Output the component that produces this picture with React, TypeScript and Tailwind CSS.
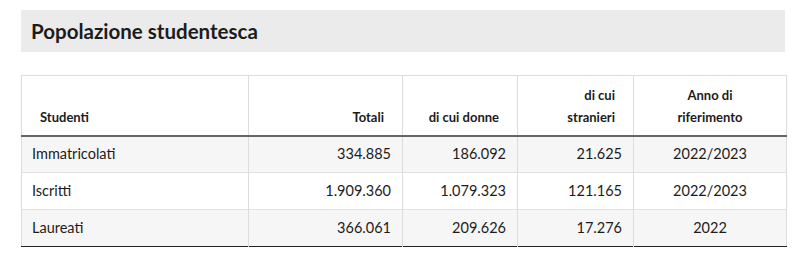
const rows = [
  { label: 'Immatricolati', totali: '334.885', donne: '186.092', stranieri: '21.625', anno: '2022/2023' },
  { label: 'Iscritti', totali: '1.909.360', donne: '1.079.323', stranieri: '121.165', anno: '2022/2023' },
  { label: 'Laureati', totali: '366.061', donne: '209.626', stranieri: '17.276', anno: '2022' },
]

export default function App() {
  return (
    <div
      className="h-[258px] w-[800px] bg-white pl-[21px] pt-[10px] text-[#1c1c1c]"
      style={{ fontFamily: 'Lato, "Noto Sans", sans-serif' }}
    >
      {/* Titolo sezione */}
      <div className="flex h-[42px] w-[764px] items-center bg-[#ebebeb] pl-[10px]">
        <h2 className="text-[20.5px] font-bold">Popolazione studentesca</h2>
      </div>

      {/* Tabella */}
      <table className="mt-[23px] w-[765px] table-fixed border-collapse border border-[#dcdcdc] text-[14.5px]">
        <colgroup>
          <col className="w-[227px]" />
          <col className="w-[154px]" />
          <col className="w-[115px]" />
          <col className="w-[116px]" />
          <col className="w-[153px]" />
        </colgroup>
        <thead>
          <tr className="h-[60px] border-b-2 border-[#666]">
            <th className="border-r border-[#dcdcdc] px-[18px] pb-[7px] text-left align-bottom text-[13px] leading-[22px] font-bold">
              Studenti
            </th>
            <th className="border-r border-[#dcdcdc] px-[18px] pb-[7px] text-right align-bottom text-[13px] leading-[22px] font-bold">
              Totali
            </th>
            <th className="border-r border-[#dcdcdc] px-[18px] pb-[7px] text-right align-bottom text-[13px] leading-[22px] font-bold">
              di cui donne
            </th>
            <th className="border-r border-[#dcdcdc] px-[18px] pb-[7px] text-right align-bottom text-[13px] leading-[22px] font-bold">
              di cui
              <br />
              stranieri
            </th>
            <th className="px-[18px] pb-[7px] text-center align-bottom text-[13px] leading-[22px] font-bold">
              Anno di
              <br />
              riferimento
            </th>
          </tr>
        </thead>
        <tbody>
          {rows.map((r, i) => (
            <tr
              key={r.label}
              className={`h-[37px] ${i === rows.length - 1 ? 'border-b border-[#222]' : 'border-b border-[#e0e0e0]'} ${
                i % 2 === 0 ? 'bg-[#f6f6f6]' : 'bg-white'
              }`}
            >
              <td className="border-r border-[#dcdcdc] px-[10px]">{r.label}</td>
              <td className="border-r border-[#dcdcdc] px-[11px] text-right">{r.totali}</td>
              <td className="border-r border-[#dcdcdc] px-[11px] text-right">{r.donne}</td>
              <td className="border-r border-[#dcdcdc] px-[11px] text-right">{r.stranieri}</td>
              <td className="px-[11px] text-center">{r.anno}</td>
            </tr>
          ))}
        </tbody>
      </table>
    </div>
  )
}
